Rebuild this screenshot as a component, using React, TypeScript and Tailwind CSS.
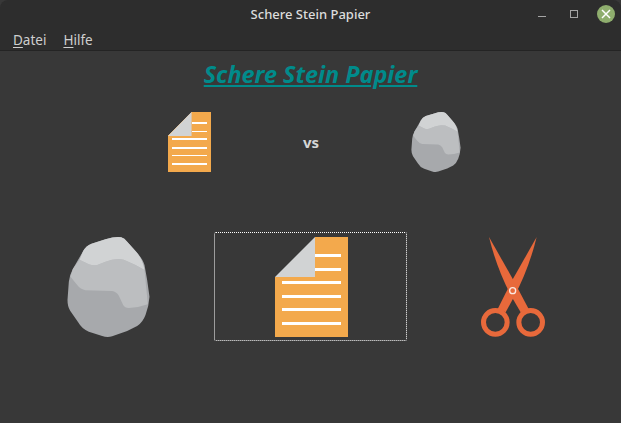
const font = { fontFamily: '"Noto Sans", sans-serif' };

function PaperIcon({ className }: { className: string }) {
  return (
    <svg viewBox="0 0 73 100" className={className} preserveAspectRatio="none" shapeRendering="crispEdges">
      <path d="M40 0H73V100H0V40Z" fill="#f3a94c" />
      <path d="M40 0V40H0Z" fill="#d1d3d4" shapeRendering="auto" />
      <g fill="#ffffff">
        <rect x="40" y="17" width="26" height="3" />
        <rect x="40" y="31" width="26" height="3" />
        <rect x="7" y="44" width="59" height="3" />
        <rect x="7" y="58" width="59" height="3" />
        <rect x="7" y="71" width="59" height="3" />
        <rect x="7" y="85" width="59" height="3" />
      </g>
    </svg>
  );
}

const stoneOutline =
  "M83 78Q92 62 108 56L150 43Q180 34 197 37Q207 39 215 50L240 78Q262 102 267 120L275 165L282 215Q280 245 270 270Q262 292 245 303L215 318L170 334Q155 338 140 333L100 320Q80 313 68 292L44 257Q36 245 36 225L40 170Q42 150 52 132Z";

function StoneIcon({ className }: { className: string }) {
  return (
    <svg viewBox="36 36 246 300" className={className}>
      <path d={stoneOutline} fill="#a7a9ac" />
      <path
        d="M72 104L100 118Q112 122 125 120L150 110Q180 98 205 104L240 120L267 135L277 238Q250 248 220 249Q208 249 203 240L190 212Q182 200 170 198L90 196Q75 193 65 180L45 155L52 132Z"
        fill="#bcbec0"
      />
      <path
        d="M83 78Q92 62 108 56L150 43Q180 34 197 37Q207 39 215 50L240 78Q262 102 267 135L240 120L205 104Q180 98 150 110L125 120Q112 122 100 118L72 104Z"
        fill="#d1d3d4"
      />
    </svg>
  );
}

function ScissorsIcon({ className }: { className: string }) {
  return (
    <svg viewBox="33 36 192 300" className={className}>
      <g fill="#e8693b">
        <path d="M57 36L130 165L176 252L152 262L124 214Q80 130 57 36Z" />
        <path d="M200 36L127 165L83 252L107 262L133 214Q177 130 200 36Z" />
      </g>
      <g fill="none" stroke="#e8693b" strokeWidth="15">
        <circle cx="76" cy="292" r="35.5" />
        <circle cx="182" cy="292" r="35.5" />
      </g>
      <circle cx="128" cy="197" r="9" fill="#e8693b" stroke="#fbe9e2" strokeWidth="4" />
    </svg>
  );
}

export default function App() {
  return (
    <div className="w-[621px] h-[423px] flex flex-col overflow-hidden bg-[#383838]" style={font}>
      <header className="h-[51px] shrink-0 flex flex-col bg-[#2d2d2d] border-b border-[#242424] rounded-t-lg">
        <div className="h-[29px] shrink-0 relative flex items-center justify-center">
          <span className="text-[13px] font-medium text-[#dcdcdc]">Schere Stein Papier</span>
          <div className="absolute left-[538px] top-[16px] w-2 h-px bg-[#a5a5a5]" />
          <div className="absolute left-[570px] top-[10px] w-[8px] h-[8px] border border-[#a5a5a5]" />
          <div className="absolute left-[597px] top-[5px] w-[18px] h-[18px] rounded-full bg-[#8fae6e] flex items-center justify-center">
            <svg viewBox="0 0 10 10" className="w-[10px] h-[10px]">
              <path d="M1 1L9 9M9 1L1 9" stroke="#ffffff" strokeWidth="1.5" />
            </svg>
          </div>
        </div>
        <nav className="flex pl-[13px] gap-[17px] text-[13.5px] leading-5 mt-px text-[#cfcfcf]">
          <span>
            <u className="underline-offset-2">D</u>atei
          </span>
          <span>
            <u className="underline-offset-2">H</u>ilfe
          </span>
        </nav>
      </header>
      <main className="flex-1 flex flex-col">
        <h1 className="mt-[8px] h-[30px] leading-[30px] text-center text-[23.4px] font-bold italic underline underline-offset-[2px] text-[#008b8b]">
          Schere Stein Papier
        </h1>
        <div className="mt-[23px] pl-[168px] flex items-center">
          <PaperIcon className="w-[43px] h-[60px]" />
          <div className="w-[200px] text-center text-[15px] pt-px font-bold text-[#d6d6d6]">vs</div>
          <StoneIcon className="w-[50px] h-[60px]" />
        </div>
        <div className="mt-[60px] pl-[67px] flex items-center">
          <StoneIcon className="w-[83px] h-[100px]" />
          <div className="ml-[64px] w-[193px] h-[109px] flex items-center justify-center rounded-[2px] border border-dotted border-white">
            <PaperIcon className="ml-px w-[73px] h-[100px]" />
          </div>
          <ScissorsIcon className="ml-[74px] w-[64px] h-[100px]" />
        </div>
      </main>
    </div>
  );
}
